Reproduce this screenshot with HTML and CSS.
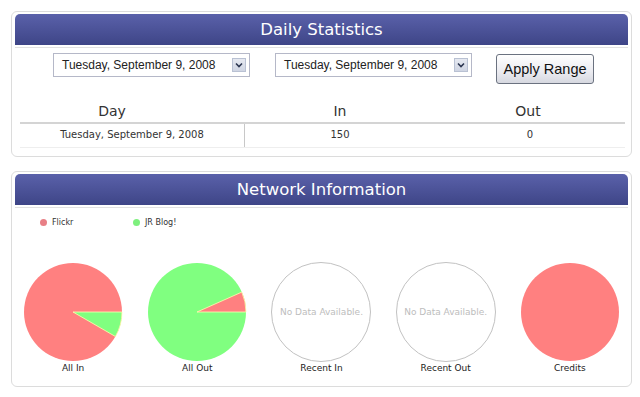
FILE: index.html
```html
<!DOCTYPE html>
<html>
<head>
<meta charset="utf-8">
<title>Statistics</title>
<link rel="stylesheet" href="styles.css">
</head>
<body>
<div class="page">
  <section class="panel">
    <h2 class="panel-head">Daily Statistics</h2>
    <div class="rule"></div>
    <div class="controls">
      <div class="select"><span>Tuesday, September 9, 2008</span><span class="arrow"><svg width="8" height="6" viewBox="0 0 8 6"><path d="M1 1.5 L4 4.5 L7 1.5" fill="none" stroke="#2b3550" stroke-width="1.6"/></svg></span></div>
      <div class="select"><span>Tuesday, September 9, 2008</span><span class="arrow"><svg width="8" height="6" viewBox="0 0 8 6"><path d="M1 1.5 L4 4.5 L7 1.5" fill="none" stroke="#2b3550" stroke-width="1.6"/></svg></span></div>
      <button class="btn">Apply Range</button>
    </div>
    <div class="thead">
      <span>Day</span><span>In</span><span>Out</span><span></span>
    </div>
    <div class="trow">
      <span class="c-day">Tuesday, September 9, 2008</span><span>150</span><span>0</span>
    </div>
  </section>

  <section class="panel panel-net">
    <h2 class="panel-head">Network Information</h2>
    <div class="rule"></div>
    <div class="legend">
      <span class="lg"><i class="dot red"></i>Flickr</span>
      <span class="lg"><i class="dot green"></i>JR Blog!</span>
    </div>
    <div class="pies">
      <figure class="pie">
        <svg width="100" height="100" viewBox="0 0 100 100">
          <circle cx="50" cy="50" r="49" fill="#ff8080"/>
          <path d="M50 50 L99 50 A49 49 0 0 1 92.4 74.5 Z" fill="#80ff80" stroke="#ffffb0" stroke-width="0.8"/>
        </svg>
        <figcaption>All In</figcaption>
      </figure>
      <figure class="pie">
        <svg width="100" height="100" viewBox="0 0 100 100">
          <circle cx="50" cy="50" r="49" fill="#80ff80"/>
          <path d="M50 50 L99 50 A49 49 0 0 0 94.8 30.1 Z" fill="#ff8080" stroke="#ffffb0" stroke-width="0.8"/>
        </svg>
        <figcaption>All Out</figcaption>
      </figure>
      <figure class="pie">
        <div class="nodata">No Data Available.</div>
        <figcaption>Recent In</figcaption>
      </figure>
      <figure class="pie">
        <div class="nodata">No Data Available.</div>
        <figcaption>Recent Out</figcaption>
      </figure>
      <figure class="pie">
        <svg width="100" height="100" viewBox="0 0 100 100">
          <circle cx="50" cy="50" r="49" fill="#ff8080"/>
        </svg>
        <figcaption>Credits</figcaption>
      </figure>
    </div>
  </section>
</div>
</body>
</html>
```

FILE: styles.css
```css
html, body {
  margin: 0;
  padding: 0;
  background: #fff;
}
.page {
  padding: 11px 8px 0 11px;
  width: 621px;
  font-family: "DejaVu Sans", Verdana, sans-serif;
  color: #333;
}
.panel {
  border: 1px solid #dcdcdc;
  border-radius: 6px;
  padding: 2px 3px 0 3px;
  margin: 0 0 14px 0;
  height: 146px;
  box-sizing: border-box;
}
.panel-net {
  height: 216px;
}
.panel-head {
  margin: 0;
  height: 31px;
  line-height: 31px;
  text-align: center;
  color: #fff;
  font-weight: normal;
  font-size: 16.5px;
  border-radius: 5px 5px 0 0;
  background: linear-gradient(#5a61aa, #3e4587);
}
.rule {
  margin-top: 2px;
  border-top: 1px solid #e2e2e2;
}
.controls {
  display: flex;
  align-items: flex-start;
  padding: 5px 0 0 38px;
  height: 50px;
  box-sizing: border-box;
}
.select {
  width: 197px;
  height: 24px;
  box-sizing: border-box;
  border: 1px solid #b5b8c8;
  display: flex;
  align-items: center;
  justify-content: space-between;
  padding: 0 3px 0 8px;
  font-family: "Liberation Sans", Arial, sans-serif;
  font-size: 12px;
  color: #222;
  margin-right: 25px;
  background: #fff;
}
.arrow {
  width: 14px;
  height: 14px;
  box-sizing: border-box;
  border: 1px solid #b9c1d3;
  background: linear-gradient(#e6e9f1, #cfd5e3);
  display: flex;
  align-items: center;
  justify-content: center;
}
.btn {
  margin: 1px 0 0 -1px;
  width: 98px;
  height: 30px;
  border: 1px solid #6b7280;
  border-radius: 3px;
  background: linear-gradient(#ffffff, #ebebf0 60%, #d6d8e0);
  font-family: "Liberation Sans", Arial, sans-serif;
  font-size: 14.5px;
  color: #111;
  padding: 0;
}
.thead {
  display: grid;
  grid-template-columns: 184px 272px 104px 1fr;
  margin: 0 3px 0 5px;
  border-bottom: 2px solid #d4d4d4;
  font-size: 14px;
  height: 26px;
  padding-top: 3px;
  line-height: 21px;
  box-sizing: border-box;
  text-align: center;
}
.trow {
  display: grid;
  grid-template-columns: 225px 190px 190px;
  margin: 0 3px 0 5px;
  font-size: 10px;
  height: 24px;
  line-height: 22px;
  text-align: center;
  border-bottom: 1px solid #eeeeee;
  box-sizing: border-box;
}
.c-day {
  border-right: 1px solid #c8c8c8;
}
.legend {
  display: flex;
  padding: 7px 0 0 25px;
  height: 29px;
  box-sizing: border-box;
  font-size: 8px;
  color: #333;
}
.lg {
  display: flex;
  align-items: center;
  height: 14px;
  width: 93px;
}
.dot {
  display: inline-block;
  width: 7px;
  height: 7px;
  border-radius: 50%;
  margin-right: 5px;
}
.dot.red { background: #e87f86; }
.dot.green { background: #7ef07e; }
.pies {
  display: grid;
  grid-template-columns: repeat(5, 1fr);
  margin: 25px -4px 0 -4px;
}
.pie {
  margin: 0;
  display: flex;
  flex-direction: column;
  align-items: center;
}
.pie svg {
  display: block;
  width: 100px;
  height: 100px;
}
.nodata {
  width: 100px;
  height: 100px;
  box-sizing: border-box;
  border: 1.5px solid #c2c2c2;
  border-radius: 50%;
  display: flex;
  align-items: center;
  justify-content: center;
  font-size: 9px;
  color: #bdbdbd;
}
.pie figcaption {
  font-size: 9px;
  color: #222;
  margin-top: 1px;
}
```
